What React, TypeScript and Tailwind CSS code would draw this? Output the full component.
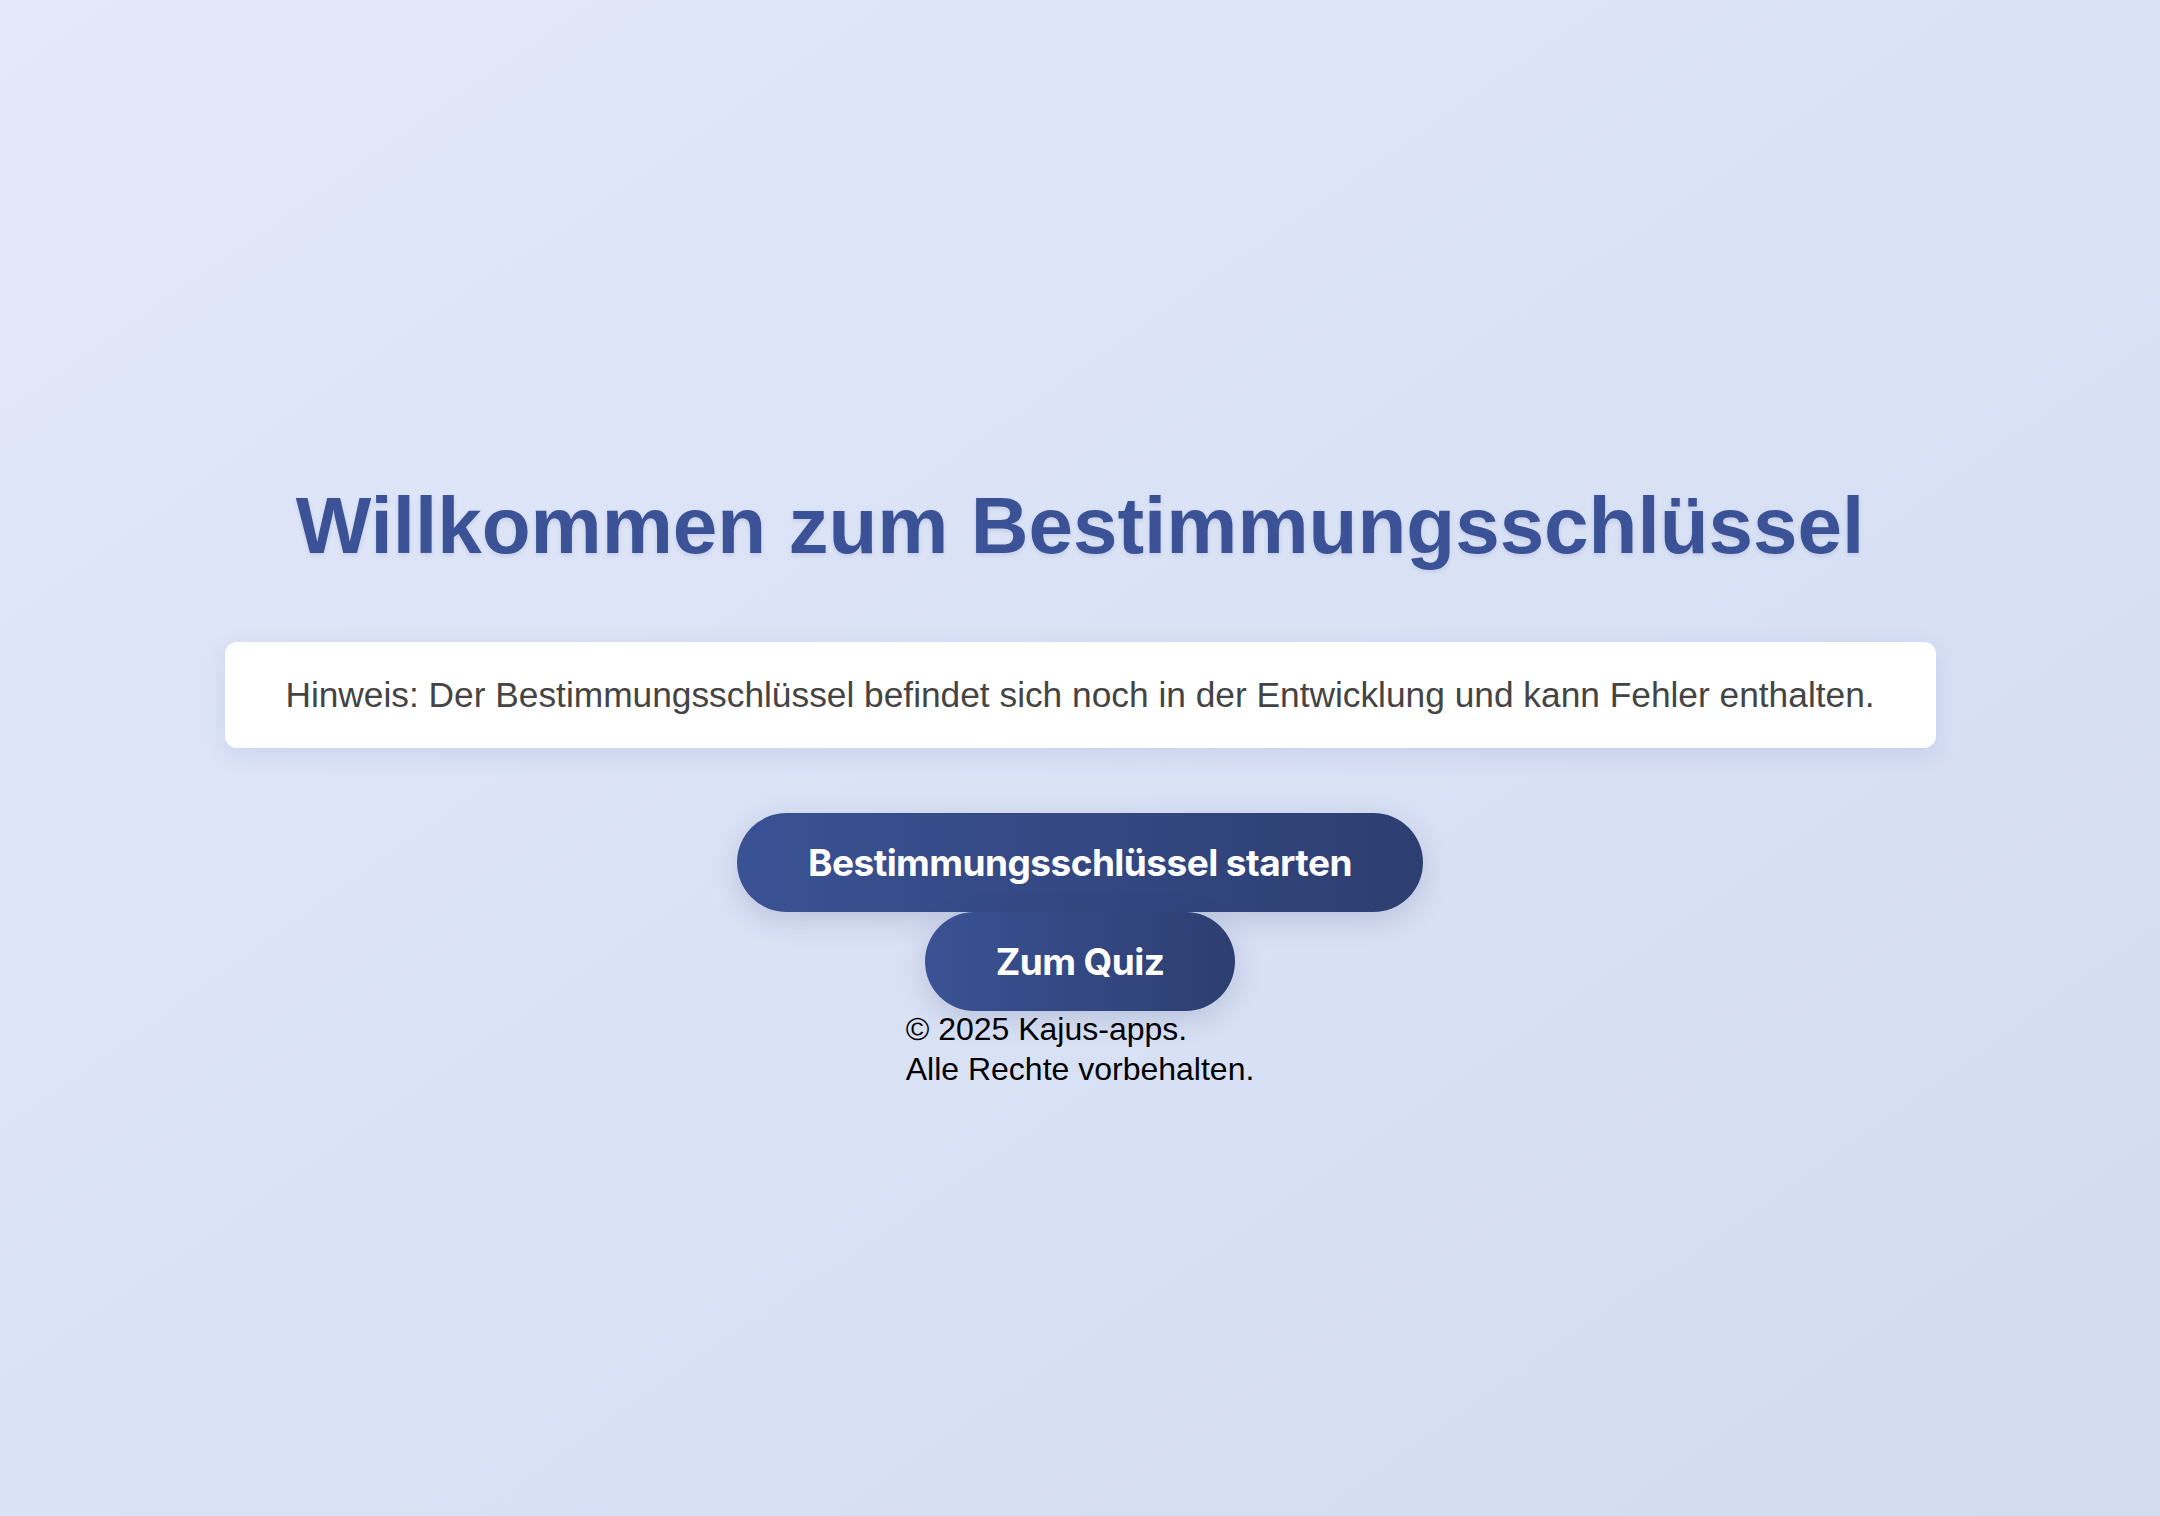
export default function App() {
  return (
    <main className="min-h-screen w-full bg-gradient-to-br from-[#e3e8fa] to-[#d1dcf1] font-['Liberation_Sans',Arial,sans-serif]">
      <div className="flex flex-col items-center pt-[480px] pb-20">
        <h1 className="text-[80px] leading-[92px] font-bold text-[#3b5396] [text-shadow:0_2px_4px_rgba(59,83,150,0.15)]">
          Willkommen zum Bestimmungsschlüssel
        </h1>

        <div className="mt-[70px] w-[1711px] rounded-xl bg-white py-[33px] text-center text-[35.3px] leading-[40px] text-[#444] shadow-[0_6px_24px_rgba(60,90,170,0.12)]">
          Hinweis: Der Bestimmungsschlüssel befindet sich noch in der Entwicklung und kann Fehler enthalten.
        </div>

        <div className="mt-[65px] flex flex-col items-center font-['Inter',sans-serif]">
          <button className="h-[99px] rounded-full bg-gradient-to-r from-[#3a5294] to-[#2d3e71] px-[71px] text-[37px] font-bold tracking-[-0.015em] text-white shadow-[0_8px_28px_rgba(45,62,113,0.18)]">
            Bestimmungsschlüssel starten
          </button>
          <button className="h-[99px] rounded-full bg-gradient-to-r from-[#3a5294] to-[#2d3e71] px-[71px] text-[37px] font-bold tracking-[-0.015em] text-white shadow-[0_8px_28px_rgba(45,62,113,0.18)]">
            Zum Quiz
          </button>
        </div>

        <footer className="-mt-[2px] text-[32px] leading-[40px] text-black">
          <p>© 2025 Kajus-apps.</p>
          <p>Alle Rechte vorbehalten.</p>
        </footer>
      </div>
    </main>
  );
}
